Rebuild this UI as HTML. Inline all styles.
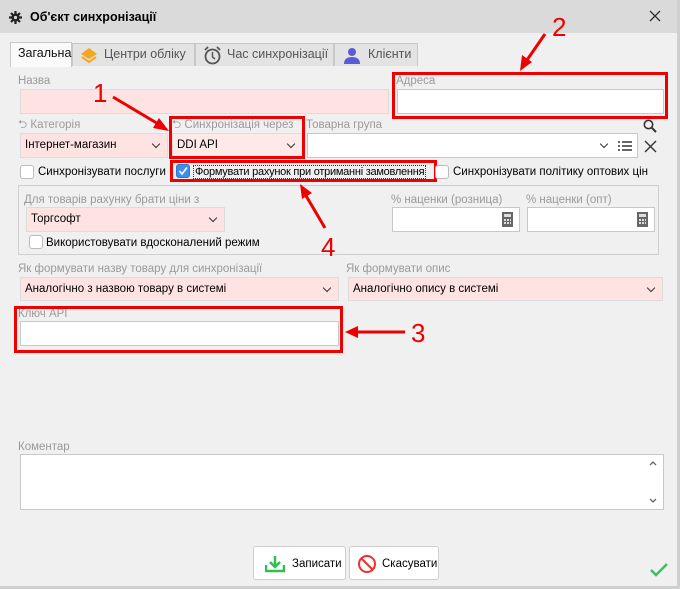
<!DOCTYPE html>
<html><head><meta charset="utf-8"><style>
*{box-sizing:border-box;margin:0;padding:0}
body{width:680px;height:589px;background:#f0f0f0;font-family:"Liberation Sans","DejaVu Sans",sans-serif;font-size:11.5px;color:#000;position:relative;overflow:hidden}
.a{position:absolute}
.lbl{position:absolute;color:#9a9a9a;font-size:11.5px;line-height:14px;white-space:nowrap}
.in{position:absolute;background:#fff;border:1px solid #c8c8c8}
.pk{background:#ffe3e3;border-color:#dcdcdc}
.sel{padding-left:4px;line-height:23px;white-space:nowrap}
.chev{position:absolute;right:8px;top:7px;width:6px;height:6px;border-right:1.5px solid #333;border-bottom:1.5px solid #333;transform:rotate(45deg)}
.red{position:absolute;border:3px solid #ee0000}
.cb{position:absolute;width:14px;height:14px;background:#fff;border:1px solid #bbb;border-radius:3px}
.t{position:absolute;white-space:nowrap;line-height:14px}
.tab{position:absolute;top:43px;height:23px;background:#e3e3e3;border:1px solid #c8c8c8;border-bottom:none;color:#555;font-size:12px;line-height:21px;white-space:nowrap}
.num{position:absolute;color:#ee0000;font-size:26px;line-height:26px}
</style></head><body>
<div class="a" style="left:0;top:0;width:680px;height:33px;background:#dadada"></div>
<div class="a" style="left:677px;top:0;width:3px;height:589px;background:#cfcfcf"></div>
<div class="a" style="left:0;top:586px;width:680px;height:3px;background:#cfcfcf"></div>
<svg class="a" style="left:9px;top:11px" width="13" height="13"><g stroke="#222" stroke-width="2.2"><path d="M6.5 0V13M0 6.5H13M2 2L11 11M11 2L2 11"/></g><circle cx="6.5" cy="6.5" r="4" fill="#222"/><circle cx="6.5" cy="6.5" r="1.6" fill="#dadada"/></svg>
<div class="t" style="left:30px;top:10px;font-weight:bold;font-size:12.5px">Об'єкт синхронізації</div>
<svg class="a" style="left:649px;top:10px" width="12" height="12"><path d="M1 1L11 11M11 1L1 11" stroke="#333" stroke-width="1.3"/></svg>

<div class="tab" style="left:10px;width:62px;top:42px;height:25px;background:#fafafa;color:#111;padding-left:7px;font-size:12.5px">Загальна</div>
<div class="tab" style="left:72px;width:123px;font-size:12.5px">
 <svg class="a" style="left:7px;top:3px" width="18" height="17"><path d="M9 1L17 7L9 12L1 7Z" fill="#f5a623"/><path d="M2 10L9 15L16 10" stroke="#f5a623" stroke-width="2" fill="none"/></svg>
 <span style="position:absolute;left:31px">Центри обліку</span></div>
<div class="tab" style="left:195px;width:139px;font-size:12.5px">
 <svg class="a" style="left:7px;top:2px" width="19" height="19"><circle cx="9.5" cy="10.5" r="7" stroke="#555" stroke-width="1.8" fill="none"/><path d="M9.5 6V11L12 13" stroke="#555" stroke-width="1.5" fill="none"/><path d="M2 4L5 1M17 4L14 1" stroke="#555" stroke-width="1.8"/></svg>
 <span style="position:absolute;left:31px">Час синхронізації</span></div>
<div class="tab" style="left:334px;width:84px;font-size:12.5px">
 <svg class="a" style="left:9px;top:3px" width="16" height="17"><circle cx="8" cy="5" r="4" fill="#5b5bd6"/><path d="M0 17Q0 10 8 10Q16 10 16 17Z" fill="#5b5bd6"/></svg>
 <span style="position:absolute;left:33px">Клієнти</span></div>

<div class="lbl" style="left:18px;top:74px">Назва</div>
<div class="in pk" style="left:20px;top:89px;width:369px;height:25px"></div>
<div class="lbl" style="left:396px;top:74px">Адреса</div>
<div class="in" style="left:397px;top:89px;width:267px;height:25px"></div>
<div class="red" style="left:392px;top:72px;width:276px;height:47px"></div>

<div class="lbl" style="left:18px;top:118px">⮌ Категорія</div>
<div class="in pk sel" style="left:20px;top:133px;width:148px;height:25px">Інтернет-магазин<div class="chev"></div></div>
<div class="lbl" style="left:172px;top:118px">⮌ Синхронізація через</div>
<div class="in pk sel" style="left:172px;top:133px;width:131px;height:25px;background:#ffe8e8">DDI API<div class="chev"></div></div>
<div class="red" style="left:169px;top:116px;width:136px;height:43px"></div>
<div class="lbl" style="left:306px;top:118px">Товарна група</div>
<div class="in" style="left:307px;top:133px;width:331px;height:25px"><div class="chev" style="right:30px"></div>
 <svg class="a" style="right:5px;top:7px" width="14" height="10"><path d="M0 1h2M4 1h10M0 5h2M4 5h10M0 9h2M4 9h10" stroke="#333" stroke-width="1.5"/></svg></div>
<svg class="a" style="left:643px;top:119px" width="14" height="14"><circle cx="5.5" cy="5.5" r="4.2" stroke="#333" stroke-width="1.6" fill="none"/><path d="M8.5 8.5L13 13" stroke="#333" stroke-width="2"/></svg>
<svg class="a" style="left:644px;top:140px" width="13" height="13"><path d="M1 1L12 12M12 1L1 12" stroke="#333" stroke-width="1.4"/></svg>

<div class="cb" style="left:20px;top:165px"></div>
<div class="t" style="left:38px;top:165px">Синхронізувати послуги</div>
<div class="cb" style="left:176px;top:164px;background:#3d8fe8;border-color:#2a78d0"><svg width="12" height="12" style="position:absolute;left:0;top:0"><path d="M2.5 6L5 9L10 2.5" stroke="#fff" stroke-width="1.6" fill="none"/></svg></div>
<div class="t" style="left:193px;top:165px;border:1px dotted #333;padding:0 1px;line-height:12px;font-size:11px;letter-spacing:-0.25px">Формувати рахунок при отриманні замовлення</div>
<div class="red" style="left:170px;top:160px;width:267px;height:22px"></div>
<div class="cb" style="left:435px;top:165px"></div>
<div class="t" style="left:453px;top:165px">Синхронізувати політику оптових цін</div>

<div class="a" style="left:18px;top:185px;width:641px;height:70px;border:1px solid #cfcfcf"></div>
<div class="lbl" style="left:24px;top:193px">Для товарів рахунку брати ціни з</div>
<div class="in pk sel" style="left:26px;top:207px;width:199px;height:25px">Торгсофт<div class="chev"></div></div>
<div class="cb" style="left:29px;top:235px"></div>
<div class="t" style="left:46px;top:236px">Використовувати вдосконалений режим</div>
<div class="lbl" style="left:391px;top:193px">% наценки (розница)</div>
<div class="in" style="left:392px;top:207px;width:128px;height:25px"><svg class="a" style="right:6px;top:4px" width="11" height="15"><rect x="0" y="0" width="11" height="15" fill="#666"/><rect x="2" y="2" width="7" height="3" fill="#ddd"/><path d="M2 7h2v2H2zM5 7h2v2H5zM8 7h1v2H8zM2 10h2v2H2zM5 10h2v2H5zM8 10h1v2H8z" fill="#ddd"/></svg></div>
<div class="lbl" style="left:526px;top:193px">% наценки (опт)</div>
<div class="in" style="left:527px;top:207px;width:128px;height:25px"><svg class="a" style="right:6px;top:4px" width="11" height="15"><rect x="0" y="0" width="11" height="15" fill="#666"/><rect x="2" y="2" width="7" height="3" fill="#ddd"/><path d="M2 7h2v2H2zM5 7h2v2H5zM8 7h1v2H8zM2 10h2v2H2zM5 10h2v2H5zM8 10h1v2H8z" fill="#ddd"/></svg></div>

<div class="lbl" style="left:18px;top:262px">Як формувати назву товару для синхронізації</div>
<div class="in pk sel" style="left:20px;top:277px;width:319px;height:24px">Аналогічно з назвою товару в системі<div class="chev"></div></div>
<div class="lbl" style="left:346px;top:262px">Як формувати опис</div>
<div class="in pk sel" style="left:348px;top:277px;width:315px;height:24px">Аналогічно опису в системі<div class="chev"></div></div>

<div class="lbl" style="left:18px;top:307px">Ключ API</div>
<div class="in" style="left:20px;top:321px;width:319px;height:25px"></div>
<div class="red" style="left:14px;top:306px;width:329px;height:47px"></div>

<div class="lbl" style="left:18px;top:440px">Коментар</div>
<div class="in" style="left:20px;top:454px;width:644px;height:56px">
 <svg class="a" style="right:6px;top:6px" width="8" height="5"><path d="M1 4L4 1L7 4" stroke="#666" stroke-width="1.3" fill="none"/></svg>
 <svg class="a" style="right:6px;bottom:6px" width="8" height="5"><path d="M1 1L4 4L7 1" stroke="#666" stroke-width="1.3" fill="none"/></svg></div>

<div class="a" style="left:253px;top:546px;width:93px;height:34px;background:#fff;border:1px solid #cfcfcf;border-radius:3px">
 <svg class="a" style="left:11px;top:8px" width="20" height="18"><path d="M1 10V16H19V10" stroke="#2fbf4f" stroke-width="2.5" fill="none"/><path d="M10 1V11M5 7L10 12L15 7" stroke="#2fbf4f" stroke-width="2.5" fill="none"/></svg>
 <span class="t" style="left:38px;top:10px">Записати</span></div>
<div class="a" style="left:349px;top:546px;width:90px;height:34px;background:#fff;border:1px solid #cfcfcf;border-radius:3px">
 <svg class="a" style="left:7px;top:7px" width="20" height="20"><circle cx="10" cy="10" r="8" stroke="#f03030" stroke-width="2" fill="none"/><path d="M4.5 4.5L15.5 15.5" stroke="#f03030" stroke-width="2"/></svg>
 <span class="t" style="left:32px;top:10px">Скасувати</span></div>
<svg class="a" style="left:650px;top:563px" width="18" height="15"><path d="M1 7L6 12L17 1" stroke="#3cc060" stroke-width="2.5" fill="none"/></svg>

<svg class="a" style="left:0;top:0" width="680" height="589">
 <g stroke="#ee0000" stroke-width="3" fill="#ee0000">
  <line x1="113" y1="97" x2="160" y2="125"/><path d="M169 131L153 128L159 118Z" stroke="none"/>
  <line x1="545" y1="34" x2="527" y2="60"/><path d="M520 71L522 55L532 62Z" stroke="none"/>
  <line x1="325" y1="228" x2="305" y2="194"/><path d="M300 184L312 193L302 199Z" stroke="none"/>
  <line x1="405" y1="332" x2="356" y2="332"/><path d="M345 332L358 326L358 338Z" stroke="none"/>
 </g>
</svg>
<div class="num" style="left:93px;top:80px">1</div>
<div class="num" style="left:552px;top:14px">2</div>
<div class="num" style="left:411px;top:320px">3</div>
<div class="num" style="left:321px;top:234px">4</div>
</body></html>
